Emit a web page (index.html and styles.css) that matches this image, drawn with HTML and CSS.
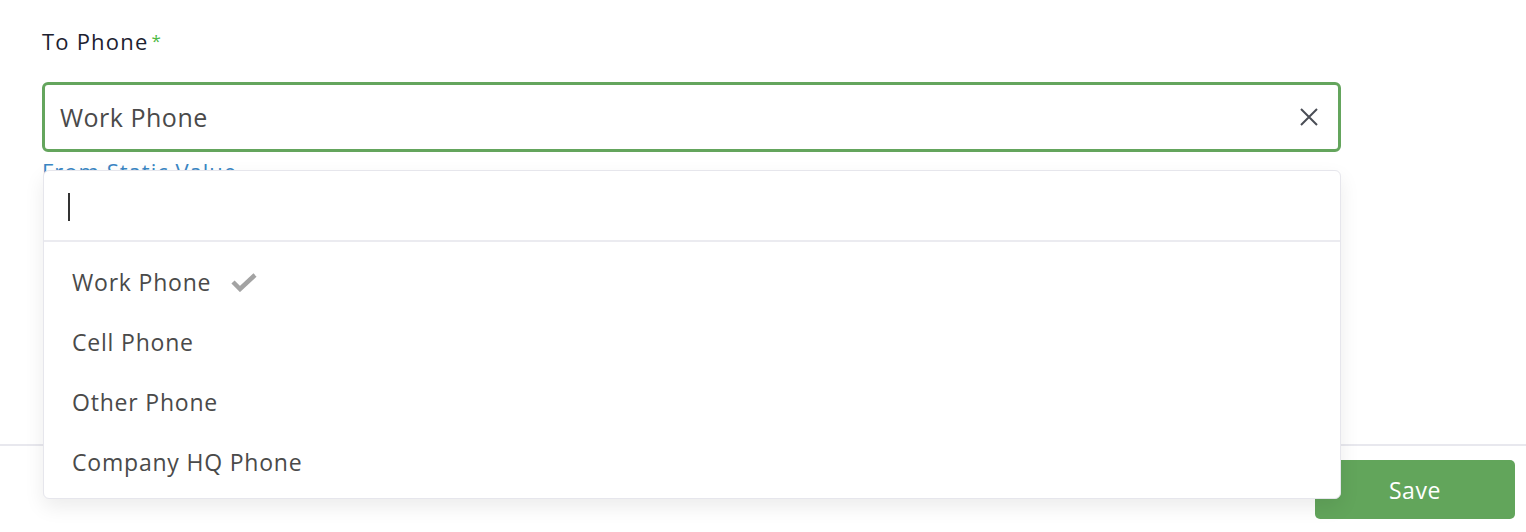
FILE: index.html
```html
<!DOCTYPE html>
<html lang="en">

<head>
    <meta charset="UTF-8">
    <meta name="viewport" content="width=device-width, initial-scale=1.0">
    <title>To Phone</title>
    <link rel="stylesheet" href="styles.css">
</head>

<body>
    <div class="page">
        <div class="form-body">
            <div class="field">
                <label class="field-label">To Phone<span class="required">*</span></label>
                <div class="select">
                    <div class="select-control">
                        <span class="select-value">Work Phone</span>
                        <svg class="clear-icon" width="20" height="20" viewBox="0 0 20 20">
                            <path d="M2 2 L18 18 M18 2 L2 18" stroke="#4a4d55" stroke-width="2" fill="none" />
                        </svg>
                    </div>
                    <a class="static-link" href="#">From Static Value</a>
                    <div class="select-menu">
                        <div class="menu-search">
                            <span class="caret"></span>
                        </div>
                        <ul class="menu-options">
                            <li class="option selected">Work Phone
                                <svg class="check" width="26" height="20" viewBox="0 0 26 20">
                                    <path d="M2 10 L9 17 L24 3" stroke="#a3a3a3" stroke-width="4.5" fill="none" />
                                </svg>
                            </li>
                            <li class="option">Cell Phone</li>
                            <li class="option">Other Phone</li>
                            <li class="option">Company HQ Phone</li>
                        </ul>
                    </div>
                </div>
            </div>
        </div>
        <div class="footer">
            <button class="save-btn">Save</button>
        </div>
    </div>
</body>

</html>
```

FILE: styles.css
```css
body {
    margin: 0;
    font-family: "Open Sans", "Liberation Sans", sans-serif;
    background: #fff;
    color: #4a4a4a;
}

.page {
    display: flex;
    flex-direction: column;
    height: 532px;
}

.form-body {
    height: 446px;
    box-sizing: border-box;
    border-bottom: 2px solid #e8e8ee;
    padding: 26px 0 0 42px;
}

.field {
    width: 1299px;
}

.field-label {
    display: block;
    font-size: 22px;
    line-height: 30px;
    letter-spacing: 1.2px;
    color: #1c2130;
}

.required {
    color: #4cb944;
    font-size: 17px;
    vertical-align: top;
    margin-left: 3px;
}

.select {
    position: relative;
    margin-top: 26px;
}

.select-control {
    display: flex;
    align-items: center;
    justify-content: space-between;
    height: 70px;
    box-sizing: border-box;
    border: 3px solid #64a55d;
    border-radius: 6px;
    padding: 0 19px 0 15px;
}

.select-value {
    font-size: 25px;
    letter-spacing: 0.5px;
    color: #4a4a4a;
}

.static-link {
    display: block;
    font-size: 22px;
    line-height: 30px;
    letter-spacing: 1px;
    color: #3a86c4;
    text-decoration: none;
    margin-top: 4px;
}

.select-menu {
    position: absolute;
    top: 88px;
    left: 1px;
    right: 0;
    background: #fff;
    border: 1px solid #e6e6ec;
    border-radius: 6px;
    box-shadow: 0 8px 20px rgba(0, 0, 0, 0.08);
}

.menu-search {
    height: 71px;
    box-sizing: border-box;
    border-bottom: 2px solid #ebebf0;
    padding: 22px 0 0 24px;
}

.caret {
    display: block;
    width: 2px;
    height: 28px;
    background: #333;
}

.menu-options {
    list-style-type: none;
    margin: 0;
    padding: 10px 0 6px;
}

.option {
    display: flex;
    align-items: center;
    gap: 20px;
    height: 60px;
    padding-left: 28px;
    font-size: 23px;
    letter-spacing: 0.8px;
    color: #4a4a4a;
}

.footer {
    display: flex;
    justify-content: flex-end;
    padding: 14px 11px 0 0;
}

.save-btn {
    width: 200px;
    height: 59px;
    border: none;
    border-radius: 5px;
    background: #62a55b;
    color: #fff;
    font-family: "Open Sans", "Liberation Sans", sans-serif;
    font-size: 23px;
    letter-spacing: 0.6px;
}
```
